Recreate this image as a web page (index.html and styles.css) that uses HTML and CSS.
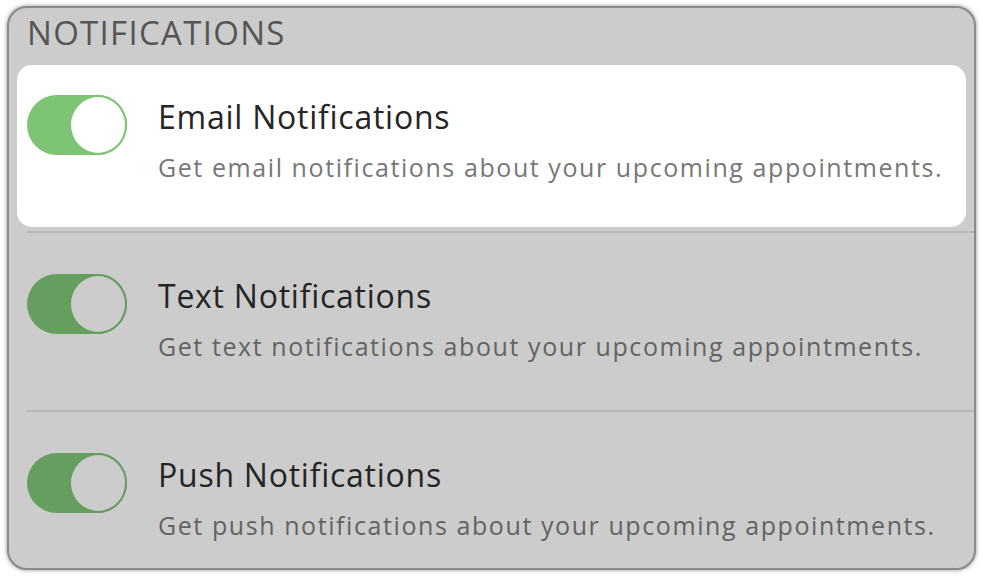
FILE: index.html
```html
<!DOCTYPE html>
<html lang="en">

<head>
    <meta charset="UTF-8">
    <meta name="viewport" content="width=device-width, initial-scale=1.0">
    <title>Notifications</title>
    <link rel="stylesheet" href="styles.css">
</head>

<body>

    <div class="panel">
        <h2 class="panel-title">NOTIFICATIONS</h2>

        <ul class="settings">
            <li class="setting active">
                <div class="setting-body">
                    <span class="switch"><span class="knob"></span></span>
                    <div class="setting-text">
                        <h3 class="setting-name">Email Notifications</h3>
                        <p class="setting-desc">Get email notifications about your upcoming appointments.</p>
                    </div>
                </div>
            </li>
            <li class="setting">
                <div class="setting-body">
                    <span class="switch"><span class="knob"></span></span>
                    <div class="setting-text">
                        <h3 class="setting-name">Text Notifications</h3>
                        <p class="setting-desc">Get text notifications about your upcoming appointments.</p>
                    </div>
                </div>
            </li>
            <li class="setting">
                <div class="setting-body">
                    <span class="switch"><span class="knob"></span></span>
                    <div class="setting-text">
                        <h3 class="setting-name">Push Notifications</h3>
                        <p class="setting-desc">Get push notifications about your upcoming appointments.</p>
                    </div>
                </div>
            </li>
        </ul>
    </div>

</body>

</html>
```

FILE: styles.css
```css
* {
    margin: 0;
    padding: 0;
    list-style: none;
    box-sizing: border-box;
}

body {
    background-color: #fff;
    font-family: "Open Sans", Lato, sans-serif;
    padding: 6px 7px;
    width: 983px;
    height: 577px;
    overflow: hidden;
}

.panel {
    width: 969px;
    height: 564px;
    background-color: #ccc;
    border: 2px solid #8a8a8a;
    border-radius: 20px;
    box-shadow: 0 0 4px rgba(0, 0, 0, .45);
    overflow: hidden;
}

.panel-title {
    font-size: 33px;
    font-weight: 400;
    letter-spacing: 1.3px;
    color: #555;
    line-height: 42px;
    padding: 4px 0 0 18px;
}

.settings {
    margin-left: 18px;
}

.setting {
    padding: 11px 0 4px;
    border-bottom: 2px solid #b8b8b8;
}

.setting:last-child {
    border-bottom: none;
}

.setting-body {
    display: flex;
    align-items: flex-start;
    gap: 31px;
    height: 162px;
    padding: 30px 10px;
    margin: 0 8px 0 -10px;
    border-radius: 15px;
}

.active .setting-body {
    background-color: #fff;
}

/* 开关 */
.switch {
    flex: none;
    display: flex;
    justify-content: flex-end;
    width: 100px;
    height: 60px;
    border-radius: 30px;
    background-color: #659e5e;
}

.knob {
    width: 58px;
    height: 60px;
    border-radius: 50%;
    background-color: #ccc;
    border: 2px solid #659e5e;
}

.active .switch {
    background-color: #7dc474;
}

.active .knob {
    background-color: #fff;
    border-color: #7dc474;
}

.setting-text {
    padding-top: 2px;
}

.setting-name {
    font-size: 32px;
    font-weight: 400;
    letter-spacing: .75px;
    color: #252525;
    line-height: 40px;
}

.setting-desc {
    margin-top: 13px;
    font-size: 25px;
    letter-spacing: 1.58px;
    color: #636363;
    line-height: 34px;
}

.active .setting-desc {
    color: #777;
}
```
